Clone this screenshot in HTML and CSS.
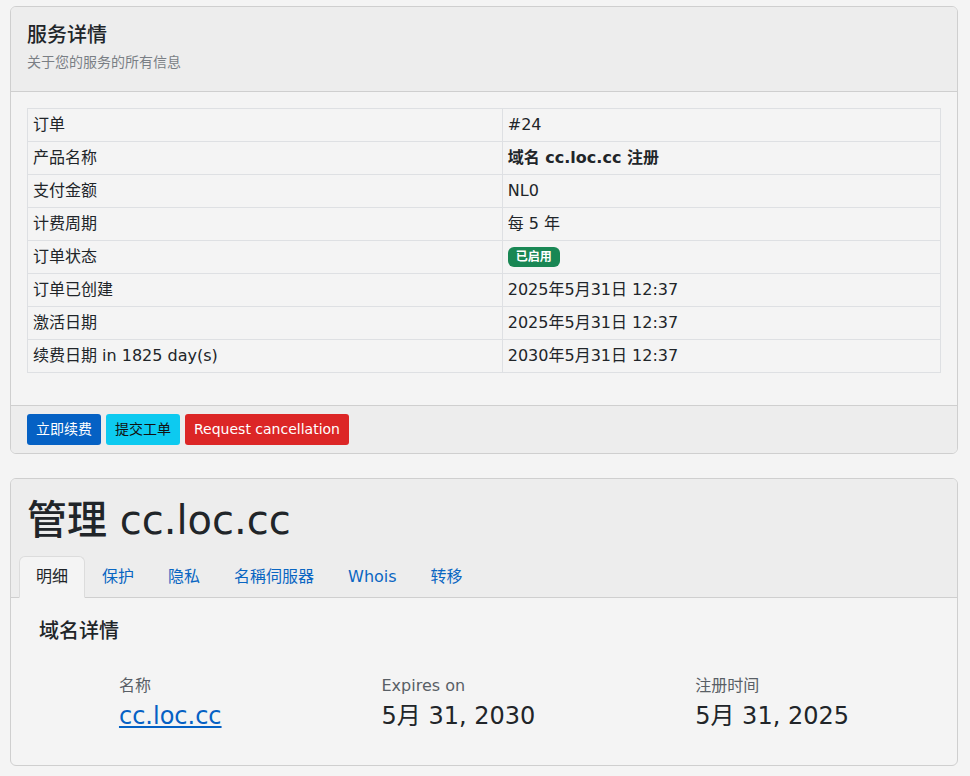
FILE: index.html
```html
<!DOCTYPE html>
<html lang="zh">
<head>
<meta charset="utf-8">
<title>服务详情</title>
<link rel="stylesheet" href="styles.css">
</head>
<body>
<div class="page">
  <section class="card">
    <header class="card-header">
      <h3 class="card-title">服务详情</h3>
      <p class="card-sub">关于您的服务的所有信息</p>
    </header>
    <div class="card-body">
      <table class="info">
        <tbody>
          <tr><td class="k">订单</td><td>#24</td></tr>
          <tr><td class="k">产品名称</td><td><strong>域名 cc.loc.cc 注册</strong></td></tr>
          <tr><td class="k">支付金额</td><td>NL0</td></tr>
          <tr><td class="k">计费周期</td><td>每 5 年</td></tr>
          <tr><td class="k">订单状态</td><td><span class="badge">已启用</span></td></tr>
          <tr><td class="k">订单已创建</td><td>2025年5月31日 12:37</td></tr>
          <tr><td class="k">激活日期</td><td>2025年5月31日 12:37</td></tr>
          <tr><td class="k">续费日期 in 1825 day(s)</td><td>2030年5月31日 12:37</td></tr>
        </tbody>
      </table>
    </div>
    <footer class="card-footer">
      <a class="btn btn-blue" href="#">立即续费</a>
      <a class="btn btn-cyan" href="#">提交工单</a>
      <a class="btn btn-red" href="#">Request cancellation</a>
    </footer>
  </section>

  <section class="card">
    <header class="card-header card-header-tabs">
      <h1 class="manage-title">管理 cc.loc.cc</h1>
      <ul class="tabs">
        <li class="tab active">明细</li>
        <li class="tab">保护</li>
        <li class="tab">隐私</li>
        <li class="tab">名稱伺服器</li>
        <li class="tab">Whois</li>
        <li class="tab">转移</li>
      </ul>
    </header>
    <div class="card-body domain-body">
      <h4 class="domain-title">域名详情</h4>
      <div class="stats">
        <div class="stat">
          <div class="stat-label">名称</div>
          <a class="stat-value link" href="#">cc.loc.cc</a>
        </div>
        <div class="stat">
          <div class="stat-label">Expires on</div>
          <div class="stat-value">5月 31, 2030</div>
        </div>
        <div class="stat">
          <div class="stat-label">注册时间</div>
          <div class="stat-value">5月 31, 2025</div>
        </div>
      </div>
    </div>
  </section>
</div>
</body>
</html>
```

FILE: styles.css
```css
* { box-sizing: border-box; }
html, body { margin: 0; padding: 0; }
body {
  background: #f4f4f4;
  color: #212529;
  font-family: "DejaVu Sans", "Noto Sans CJK SC", sans-serif;
  font-size: 16px;
  line-height: 1.5;
}
.page {
  padding: 6px 12px 10px 10px;
  display: flex;
  flex-direction: column;
  gap: 24px;
}
.card {
  border: 1px solid #cfcfcf;
  border-radius: 6px;
  background: #f4f4f4;
  overflow: hidden;
}
.card-header {
  background: #ededed;
  border-bottom: 1px solid #cfcfcf;
  padding: 16px 16px 18px;
}
.card-title {
  margin: 0 0 5px;
  font-size: 20px;
  font-weight: 500;
  line-height: 1.2;
}
.card-sub {
  margin: 0;
  font-size: 14px;
  color: #7a7f85;
  line-height: 1.5;
}
.card-body {
  padding: 16px 16px 32px;
}
.info {
  width: 100%;
  border-collapse: collapse;
  font-size: 16px;
}
.info td {
  border: 1px solid #dee0e3;
  padding: 4px 5px;
  line-height: 24px;
  vertical-align: middle;
}
.info td.k { width: 52%; }
.info strong { font-weight: 700; }
.badge {
  display: inline-block;
  background: #198754;
  color: #fff;
  font-size: 12px;
  font-weight: 700;
  line-height: 12px;
  padding: 4px 8px;
  border-radius: 6px;
  vertical-align: 1px;
}
.card-footer {
  background: #ededed;
  border-top: 1px solid #cfcfcf;
  padding: 8px 16px;
  display: flex;
  gap: 5px;
}
.btn {
  display: inline-block;
  font-size: 14px;
  line-height: 21px;
  padding: 4px 8px;
  border: 1px solid transparent;
  border-radius: 3px;
  text-decoration: none;
}
.btn-blue { background: #0561c4; color: #fff; }
.btn-cyan { background: #0dcaf0; color: #111; }
.btn-red { background: #dc2626; color: #fff; }

.card-header-tabs {
  padding: 17px 16px 0;
}
.manage-title {
  margin: 0 0 12px;
  font-size: 40px;
  font-weight: 500;
  line-height: 1.2;
}
.tabs {
  list-style: none;
  margin: 0 0 -1px -8px;
  padding: 0;
  display: flex;
}
.tab {
  padding: 8px 16px;
  border: 1px solid transparent;
  border-top-left-radius: 6px;
  border-top-right-radius: 6px;
  color: #0a66c2;
  line-height: 24px;
}
.tab.active {
  background: #f4f4f4;
  color: #212529;
  border-color: #dcdcdc #dcdcdc #f4f4f4;
}
.domain-body {
  padding: 21px 28px 34px;
}
.domain-title {
  margin: 0 0 31px;
  font-size: 20px;
  font-weight: 500;
  line-height: 1.2;
}
.stats {
  display: flex;
  justify-content: space-around;
}
.stat {
  display: flex;
  flex-direction: column;
  align-items: flex-start;
}
.stat-label {
  font-size: 16px;
  color: #595f66;
  line-height: 24px;
}
.stat-value {
  font-size: 24px;
  line-height: 1.2;
  color: #212529;
  margin-top: 4px;
}
.stat-value.link {
  color: #0561c4;
  text-decoration: underline;
}
```
